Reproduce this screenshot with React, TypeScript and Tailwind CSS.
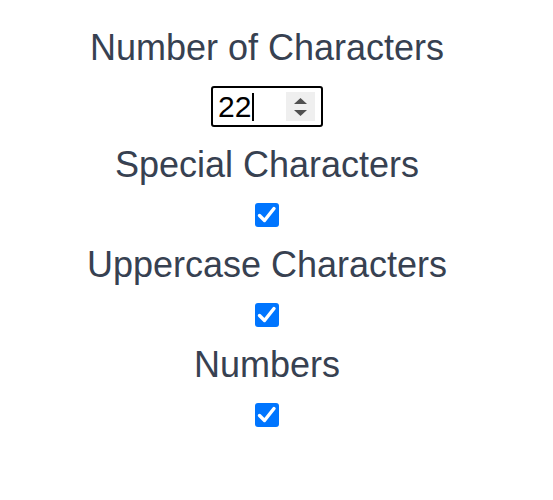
import { ReactNode } from "react";

function Label({ children }: { children: ReactNode }) {
  return (
    <div className="h-[50px] flex items-center justify-center text-[36px] text-[#374151] leading-none">
      {children}
    </div>
  );
}

function Check() {
  return (
    <div className="h-[50px] flex items-center justify-center">
      <span className="w-[24px] h-[24px] rounded-[3px] bg-[#0075ff] flex items-center justify-center">
        <svg width="24" height="24" viewBox="0 0 24 24" fill="none">
          <path
            d="M4.5 12.5 L9.5 17.5 L19 5.5"
            stroke="white"
            strokeWidth="3.4"
            strokeLinecap="round"
            strokeLinejoin="round"
          />
        </svg>
      </span>
    </div>
  );
}

export default function App() {
  return (
    <div className="w-[534px] pt-[23px] flex flex-col items-center font-['Liberation_Sans',Arial,sans-serif]">
      <Label>Number of Characters</Label>
      <div className="h-[67px] flex items-center justify-center">
        <div className="w-[112px] h-[41px] border-2 border-black rounded-[3px] flex items-center pl-[5px] pr-[6px]">
          <span className="text-[30px] text-black leading-none">22</span>
          <span className="w-[2px] h-[28px] bg-black ml-[1px]" />
          <span className="ml-auto w-[29px] h-[29px] bg-[#efefef] flex flex-col items-center justify-center gap-[6px]">
            <svg width="13" height="6" viewBox="0 0 13 6">
              <path d="M0 6 L6.5 0 L13 6 Z" fill="#505050" />
            </svg>
            <svg width="13" height="6" viewBox="0 0 13 6">
              <path d="M0 0 L13 0 L6.5 6 Z" fill="#505050" />
            </svg>
          </span>
        </div>
      </div>
      <Label>Special Characters</Label>
      <Check />
      <Label>Uppercase Characters</Label>
      <Check />
      <Label>Numbers</Label>
      <Check />
    </div>
  );
}
